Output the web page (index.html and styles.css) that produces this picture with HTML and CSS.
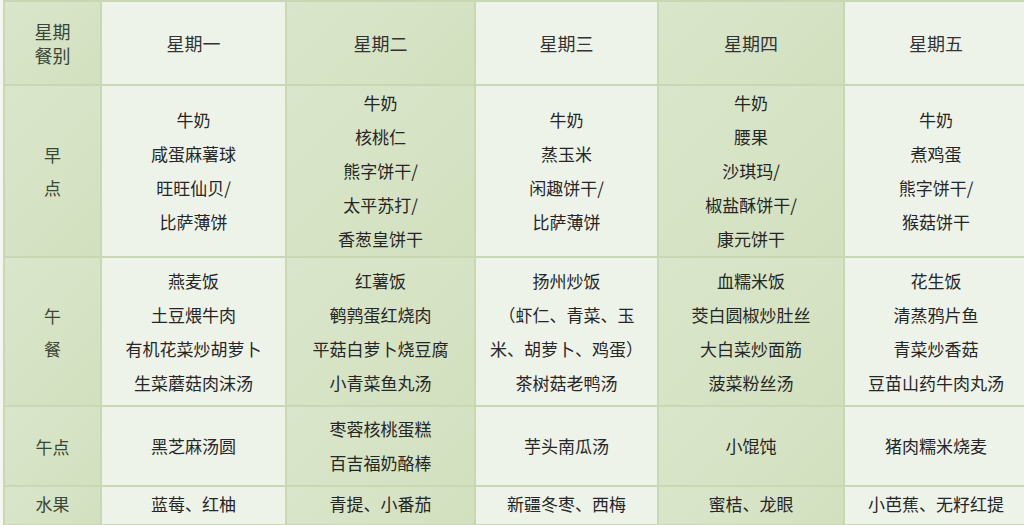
FILE: index.html
```html
<!DOCTYPE html>
<html lang="zh-CN">
<head>
<meta charset="utf-8">
<title>食谱</title>
<link rel="stylesheet" href="styles.css">
</head>
<body>
<table class="menu">
  <colgroup>
    <col class="c-label"><col class="c-mon"><col class="c-tue"><col class="c-wed"><col class="c-thu"><col class="c-fri">
  </colgroup>
  <tr class="r-head">
    <th class="label dark small">星期<br>餐别</th>
    <th class="light">星期一</th>
    <th class="dark">星期二</th>
    <th class="light">星期三</th>
    <th class="dark">星期四</th>
    <th class="light">星期五</th>
  </tr>
  <tr class="r-breakfast">
    <td class="label dark">早<br>点</td>
    <td class="light">牛奶<br>咸蛋麻薯球<br>旺旺仙贝/<br>比萨薄饼</td>
    <td class="dark">牛奶<br>核桃仁<br>熊字饼干/<br>太平苏打/<br>香葱皇饼干</td>
    <td class="light">牛奶<br>蒸玉米<br>闲趣饼干/<br>比萨薄饼</td>
    <td class="dark">牛奶<br>腰果<br>沙琪玛/<br>椒盐酥饼干/<br>康元饼干</td>
    <td class="light">牛奶<br>煮鸡蛋<br>熊字饼干/<br>猴菇饼干</td>
  </tr>
  <tr class="r-lunch">
    <td class="label dark">午<br>餐</td>
    <td class="light">燕麦饭<br>土豆煨牛肉<br>有机花菜炒胡萝卜<br>生菜蘑菇肉沫汤</td>
    <td class="dark">红薯饭<br>鹌鹑蛋红烧肉<br>平菇白萝卜烧豆腐<br>小青菜鱼丸汤</td>
    <td class="light">扬州炒饭<br>（虾仁、青菜、玉<br>米、胡萝卜、鸡蛋）<br>茶树菇老鸭汤</td>
    <td class="dark">血糯米饭<br>茭白圆椒炒肚丝<br>大白菜炒面筋<br>菠菜粉丝汤</td>
    <td class="light">花生饭<br>清蒸鸦片鱼<br>青菜炒香菇<br>豆苗山药牛肉丸汤</td>
  </tr>
  <tr class="r-snack">
    <td class="label dark">午点</td>
    <td class="light">黑芝麻汤圆</td>
    <td class="dark">枣蓉核桃蛋糕<br>百吉福奶酪棒</td>
    <td class="light">芋头南瓜汤</td>
    <td class="dark">小馄饨</td>
    <td class="light">猪肉糯米烧麦</td>
  </tr>
  <tr class="r-fruit">
    <td class="label dark">水果</td>
    <td class="light">蓝莓、红柚</td>
    <td class="dark">青提、小番茄</td>
    <td class="light">新疆冬枣、西梅</td>
    <td class="dark">蜜桔、龙眼</td>
    <td class="light">小芭蕉、无籽红提</td>
  </tr>
</table>
</body>
</html>
```

FILE: styles.css
```css
html, body {
  margin: 0;
  padding: 0;
  background: #f4f7f1;
  overflow: hidden;
}
body {
  width: 1024px;
  height: 525px;
  font-family: "Noto Sans CJK SC", "Noto Sans", sans-serif;
  color: #262626;
}
.menu {
  margin: 0 0 0 3px;
  border-collapse: separate;
  border-spacing: 2px;
  background: #c9d8b2;
  table-layout: fixed;
  width: 1026px;
}
.c-label { width: 95px; }
.c-mon { width: 183px; }
.c-tue { width: 187px; }
.c-wed { width: 181px; }
.c-thu { width: 184px; }
.c-fri { width: 182px; }
th, td {
  padding: 0;
  text-align: center;
  vertical-align: middle;
  font-weight: 400;
  font-size: 17px;
  line-height: 34px;
}
th {
  font-size: 18px;
  color: #333333;
}
.dark {
  background: linear-gradient(135deg, #dae6cb 0%, #d2e0bf 100%);
}
.light {
  background: #eef3ea;
}
.label {
  color: #3a4636;
  line-height: 33px;
}
.small {
  line-height: 24px;
}
.r-head { height: 82px; }
.r-breakfast { height: 169px; }
.r-lunch { height: 147px; }
.r-snack { height: 78px; }
.r-fruit { height: 37px; }
.r-fruit td {
  line-height: 30px;
  padding-bottom: 4px;
}
```
